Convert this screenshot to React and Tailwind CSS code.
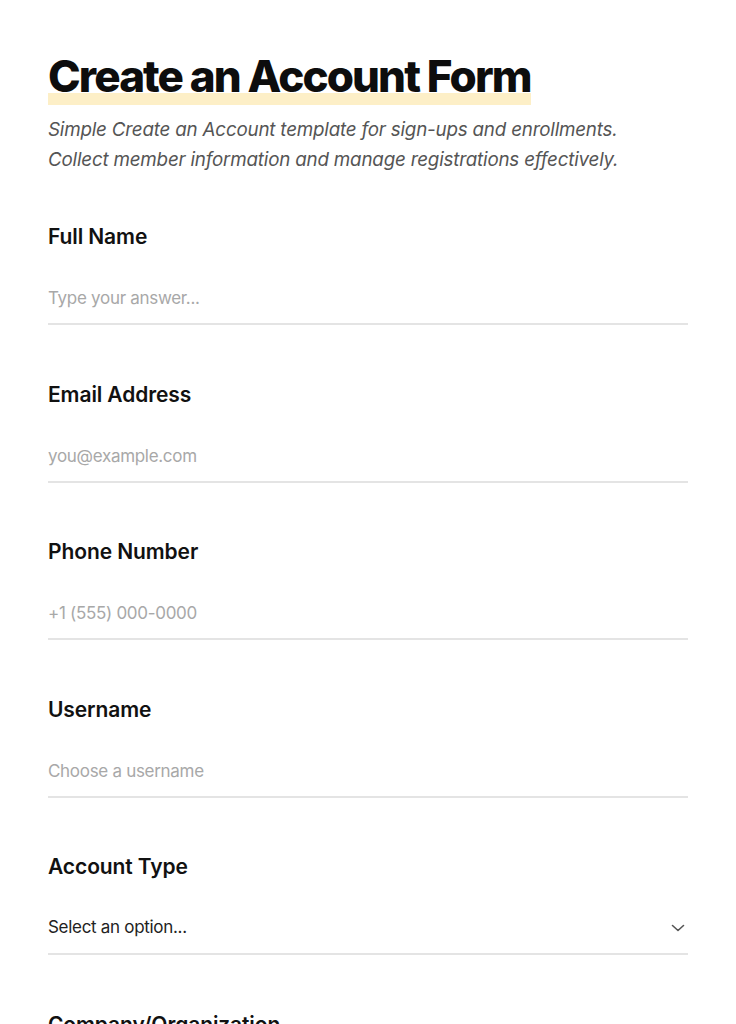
import React from "react";

const font = { fontFamily: "Inter, 'Noto Sans', sans-serif" };

function Label({ children }) {
  return <div className="text-[21px] leading-[28px] font-semibold text-[#111] tracking-[-0.1px]">{children}</div>;
}

function Field({ label, placeholder }) {
  return (
    <div className="mb-[55.5px]">
      <Label>{label}</Label>
      <input
        className="mt-[22px] block w-full h-[52px] border-b-2 border-[#e4e4e4] text-[17px] outline-none placeholder:text-[#a8a8a8] text-[#222] tracking-[-0.3px]"
        placeholder={placeholder}
      />
    </div>
  );
}

export default function App() {
  return (
    <div className="min-h-screen bg-white" style={font}>
      <div className="px-[48px] pt-[50px]">
        <h1 className="relative inline-block text-[44px] leading-[52px] font-extrabold text-[#0d0d0d] tracking-[-1.9px]">
          <span className="absolute left-0 right-0 bottom-[-3px] h-[12px] bg-[#fdefc7]"></span>
          <span className="relative">Create an Account Form</span>
        </h1>
        <p className="mt-[13px] text-[18.8px] leading-[30px] italic text-[#555] tracking-[-0.2px]">
          Simple Create an Account template for sign-ups and enrollments.
          <br />
          Collect member information and manage registrations effectively.
        </p>
        <div className="mt-[48px]">
          <Field label="Full Name" placeholder="Type your answer..." />
          <Field label="Email Address" placeholder="you@example.com" />
          <Field label="Phone Number" placeholder="+1 (555) 000-0000" />
          <Field label="Username" placeholder="Choose a username" />
          <div className="mb-[55.5px]">
            <Label>Account Type</Label>
            <div className="mt-[22px] flex items-center justify-between h-[52px] border-b-2 border-[#e4e4e4] text-[17px] text-[#222] tracking-[-0.3px]">
              <span>Select an option...</span>
              <svg width="16" height="16" viewBox="0 0 16 16" className="mr-[2px]" fill="none" stroke="#555" strokeWidth="1.6" strokeLinecap="round" strokeLinejoin="round">
                <path d="M2.5 5.5l5.5 5 5.5-5" />
              </svg>
            </div>
          </div>
          <Field label="Company/Organization" placeholder="Type your answer..." />
        </div>
      </div>
    </div>
  );
}
